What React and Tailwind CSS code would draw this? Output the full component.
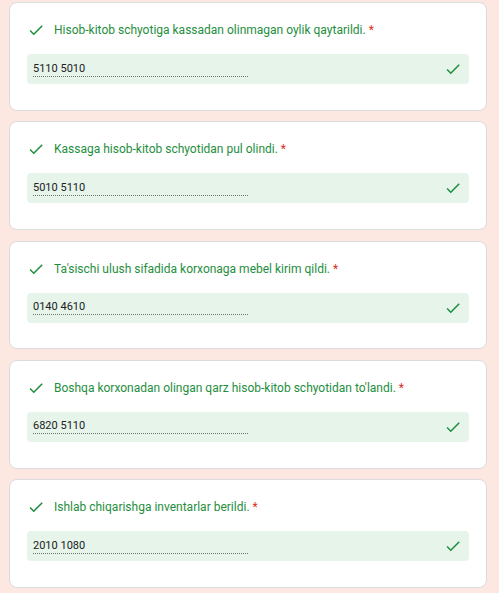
import React from "react";

const items = [
  { q: "Hisob-kitob schyotiga kassadan olinmagan oylik qaytarildi.", a: "5110 5010" },
  { q: "Kassaga hisob-kitob schyotidan pul olindi.", a: "5010 5110" },
  { q: "Ta'sischi ulush sifadida korxonaga mebel kirim qildi.", a: "0140 4610" },
  { q: "Boshqa korxonadan olingan qarz hisob-kitob schyotidan to'landi.", a: "6820 5110" },
  { q: "Ishlab chiqarishga inventarlar berildi.", a: "2010 1080" },
];

function Check() {
  return (
    <svg width="18" height="18" viewBox="0 0 24 24" className="shrink-0" fill="#1e8e3e">
      <path d="M9 16.17L4.83 12l-1.42 1.41L9 19 21 7l-1.41-1.41z" />
    </svg>
  );
}

export default function App() {
  return (
    <div
      className="min-h-[593px] w-[499px] bg-[#fde8e1] pt-[2px] pl-[9px] pr-[12px] flex flex-col gap-[10.67px]"
      style={{ fontFamily: "Roboto, 'Liberation Sans', sans-serif" }}
    >
      {items.map((it, i) => (
        <div
          key={i}
          className="bg-white border border-[#dadce0] rounded-[8px] h-[108.67px] px-[17px] pt-[18px]"
        >
          <div className="flex items-center h-[18px] gap-[9px]">
            <Check />
            <div className="text-[12px] leading-[18px] text-[#1e8e3e] whitespace-nowrap">
              {it.q} <span className="text-[#d93025]">*</span>
            </div>
          </div>
          <div className="mt-[15px] h-[30px] bg-[#e6f4ea] rounded-[4px] flex items-center justify-between pl-[6px] pr-[7px]">
            <div className="w-[215px] h-[15px] border-b border-dotted border-[#70757a] text-[11px] leading-[14px] text-[#202124]">
              {it.a}
            </div>
            <Check />
          </div>
        </div>
      ))}
    </div>
  );
}
